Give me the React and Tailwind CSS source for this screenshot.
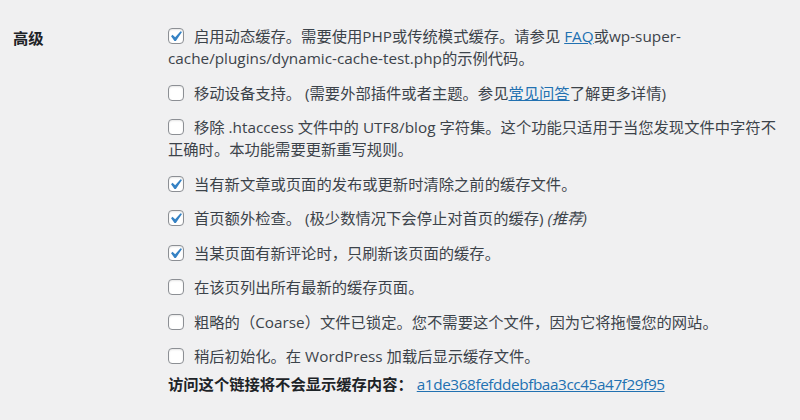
import React from "react";

const rows = [
  {
    checked: true,
    content: (
      <>
        启用动态缓存。需要使用PHP或传统模式缓存。请参见{" "}
        <a href="#" className="text-[#2271b1] underline">FAQ</a>
        或wp-super-cache/plugins/dynamic-cache-test.php的示例代码。
      </>
    ),
  },
  {
    checked: false,
    content: (
      <>
        移动设备支持。 (需要外部插件或者主题。参见
        <a href="#" className="text-[#2271b1] underline">常见问答</a>
        了解更多详情)
      </>
    ),
  },
  {
    checked: false,
    content: (
      <>
        移除 .htaccess 文件中的 UTF8/blog
        字符集。这个功能只适用于当您发现文件中字符不正确时。本功能需要更新重写规则。
      </>
    ),
  },
  { checked: true, content: "当有新文章或页面的发布或更新时清除之前的缓存文件。" },
  {
    checked: true,
    content: (
      <>
        首页额外检查。 (极少数情况下会停止对首页的缓存) <em>(推荐)</em>
      </>
    ),
  },
  { checked: true, content: "当某页面有新评论时，只刷新该页面的缓存。" },
  { checked: false, content: "在该页列出所有最新的缓存页面。" },
  { checked: false, content: "粗略的（Coarse）文件已锁定。您不需要这个文件，因为它将拖慢您的网站。" },
  { checked: false, content: "稍后初始化。在 WordPress 加载后显示缓存文件。" },
];

function Checkbox({ checked }) {
  return (
    <span className="relative inline-block w-4 h-4 mr-[10px] align-middle -mt-[3px] bg-white border border-[#8c8f94] rounded-[4px] shadow-[inset_0_1px_2px_rgba(0,0,0,0.1)]">
      {checked && (
        <svg
          viewBox="0 0 20 20"
          className="absolute -top-[3px] -left-[4px] w-[21px] h-[21px]"
        >
          <path
            fill="#3582c4"
            d="M14.83 4.89l1.34.94-5.81 8.38H9.02L5.78 9.67l1.34-1.25 2.57 2.4z"
          />
        </svg>
      )}
    </span>
  );
}

export default function App() {
  return (
    <div className="min-h-[420px] w-[800px] bg-[#f0f0f1] font-['Open_Sans','Noto_Sans_CJK_SC',sans-serif] text-[15.3px] leading-[22px] text-[#3c434a] [text-spacing-trim:space-all]">
      <div className="flex pt-[25px] pl-[13px]">
        <div className="w-[155px] shrink-0 pt-[2px] font-bold text-[#1d2327]">高级</div>
        <div className="w-[614px]">
          <div className="flex flex-col gap-[12.5px]">
            {rows.map((row, i) => (
              <label key={i} className="block">
                <Checkbox checked={row.checked} />
                {row.content}
              </label>
            ))}
          </div>
          <p className="mt-[6px]">
            <strong className="text-[#1d2327]">访问这个链接将不会显示缓存内容：</strong>{" "}
            <a href="#" className="text-[#2271b1] underline tracking-[-0.4px]">
              a1de368fefddebfbaa3cc45a47f29f95
            </a>
          </p>
        </div>
      </div>
    </div>
  );
}
